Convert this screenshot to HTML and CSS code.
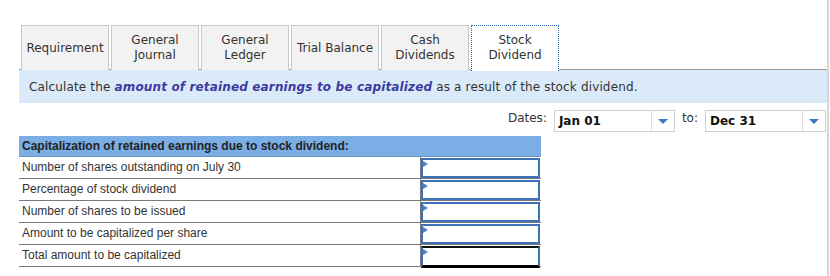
FILE: index.html
```html
<!DOCTYPE html>
<html lang="en">

<head>
  <meta charset="UTF-8" />
  <title>Stock Dividend</title>
  <link rel="stylesheet" href="styles.css">
</head>

<body>
  <main class="panel">
    <!-- Tabs -->
    <nav class="tab-bar">
      <div class="tab">Requirement</div>
      <div class="tab">General<br>Journal</div>
      <div class="tab">General<br>Ledger</div>
      <div class="tab">Trial Balance</div>
      <div class="tab">Cash<br>Dividends</div>
      <div class="tab active">Stock<br>Dividend</div>
    </nav>

    <!-- Instructions -->
    <p class="info-bar">
      Calculate the <em>amount of retained earnings to be capitalized</em> as a result of the stock dividend.
    </p>

    <!-- Date range -->
    <div class="dates-row">
      <span class="dates-label">Dates:</span>
      <div class="select">
        <span class="select-value">Jan 01</span>
        <span class="select-arrow"><i></i></span>
      </div>
      <span class="dates-label">to:</span>
      <div class="select">
        <span class="select-value">Dec 31</span>
        <span class="select-arrow"><i></i></span>
      </div>
    </div>

    <!-- Worksheet -->
    <div class="sheet">
      <div class="sheet-head">Capitalization of retained earnings due to stock dividend:</div>
      <div class="sheet-row">
        <div class="sheet-label">Number of shares outstanding on July 30</div>
        <div class="sheet-cell"><div class="cell-box"></div></div>
      </div>
      <div class="sheet-row">
        <div class="sheet-label">Percentage of stock dividend</div>
        <div class="sheet-cell"><div class="cell-box"></div></div>
      </div>
      <div class="sheet-row">
        <div class="sheet-label">Number of shares to be issued</div>
        <div class="sheet-cell"><div class="cell-box"></div></div>
      </div>
      <div class="sheet-row">
        <div class="sheet-label">Amount to be capitalized per share</div>
        <div class="sheet-cell"><div class="cell-box"></div></div>
      </div>
      <div class="sheet-row total">
        <div class="sheet-label">Total amount to be capitalized</div>
        <div class="sheet-cell"><div class="cell-box"></div></div>
      </div>
    </div>
  </main>
</body>

</html>
```

FILE: styles.css
```css
*,
*::after,
*::before {
  margin: 0;
  padding: 0;
  box-sizing: border-box;
}

body {
  background: #fff;
  font-family: 'DejaVu Sans', Verdana, sans-serif;
  font-size: 12px;
  color: #222;
}

.panel {
  margin-left: 19px;
  width: 810px;
  min-height: 276px;
  border-right: 2px solid #d6d6d6;
  padding-top: 25px;
}

/* Tabs */
.tab-bar {
  display: flex;
  gap: 2px;
  padding-left: 2px;
  border-bottom: 1px solid #9a9a9a;
  height: 45px;
}

.tab {
  width: 88px;
  height: 45px;
  display: flex;
  align-items: center;
  justify-content: center;
  text-align: center;
  line-height: 15px;
  font-size: 12px;
  color: #333;
  background-color: #f2f2f2;
  border: 1px solid #c8c8c8;
  border-bottom: none;
}

.tab.active {
  background-color: #fff;
  border: 1px dotted #2f63b0;
  border-bottom: none;
  margin-bottom: -1px;
  height: 46px;
  padding-bottom: 1px;
}

/* Instructions */
.info-bar {
  background-color: #dbeaf8;
  height: 33px;
  width: 808px;
  padding-left: 10px;
  display: flex;
  align-items: center;
  font-size: 12px;
  letter-spacing: 0.15px;
  color: #333;
}

.info-bar em {
  font-weight: bold;
  font-style: italic;
  color: #3c3a9e;
  margin: 0 4px;
}

/* Date range */
.dates-row {
  display: flex;
  justify-content: flex-end;
  align-items: flex-start;
  gap: 7px;
  margin-top: 7px;
  padding-right: 1px;
  height: 22px;
}

.dates-label {
  color: #333;
  font-size: 12px;
  line-height: 16px;
}

.select {
  width: 121px;
  height: 22px;
  display: flex;
  border: 1px solid #d0d0d0;
  background-color: #fff;
}

.select-value {
  flex: 1;
  padding-left: 4px;
  font-weight: bold;
  font-size: 12px;
  line-height: 20px;
  color: #111;
}

.select-arrow {
  width: 23px;
  border-left: 1px solid #dcdcdc;
  display: flex;
  align-items: center;
  justify-content: center;
}

.select-arrow i {
  border-left: 5px solid transparent;
  border-right: 5px solid transparent;
  border-top: 5px solid #3c78c6;
}

/* Worksheet */
.sheet {
  width: 522px;
  margin-top: 4px;
  font-family: 'Liberation Sans', Arial, sans-serif;
  font-size: 12px;
  color: #333;
}

.sheet-head {
  height: 21px;
  background-color: #7aaee4;
  border-bottom: 1px solid #6a94c4;
  padding-left: 3px;
  line-height: 20px;
  font-weight: bold;
  color: #222;
}

.sheet-row {
  display: flex;
  height: 22px;
  border-bottom: 1px solid #7a7a7a;
}

.sheet-label {
  width: 402px;
  padding-left: 3px;
  line-height: 20px;
  border-right: 1px solid #7a7a7a;
}

.sheet-cell {
  flex: 1;
  padding: 1px 1px 0 0;
}

.cell-box {
  position: relative;
  height: 20px;
  border: 2px solid #3d73b6;
  background-color: #fff;
}

.cell-box::before {
  content: "";
  position: absolute;
  left: 0;
  top: 1px;
  border-top: 3px solid transparent;
  border-bottom: 3px solid transparent;
  border-left: 5px solid #4a86c8;
}

.sheet-row.total .cell-box {
  border-top-color: #111;
  border-bottom: 3px solid #000;
  height: 22px;
}
```
